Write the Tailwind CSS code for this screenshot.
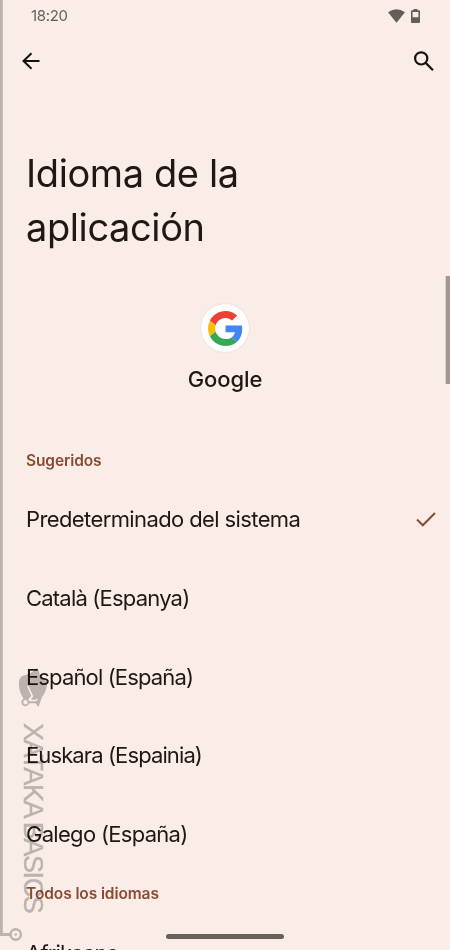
<!DOCTYPE html>
<html lang="es">
<head>
<meta charset="utf-8">
<title>Idioma de la aplicación</title>
<script src="https://cdn.jsdelivr.net/npm/@tailwindcss/browser@4"></script>
</head>
<body class="bg-[#faede8]">
<div class="relative flex h-[950px] w-[450px] flex-col overflow-hidden bg-[#faede8] font-['Inter',sans-serif] text-[#211714]">
  <header class="flex h-8 shrink-0 items-center justify-between pr-[30px] pl-[31px] text-[#655d5a]">
    <span class="text-[15px] leading-8 tracking-[-0.35px]">18:20</span>
    <div class="flex items-center gap-[6px]">
      <svg class="h-[14px] w-[17px]" viewBox="0 0 17 14" fill="currentColor"><path d="M0 3.200Q8.500-2.600 17 3.200L8.500 13.700Z"/></svg>
      <svg class="h-[14px] w-[9px]" viewBox="0 0 9 14" fill="currentColor"><path fill-rule="evenodd" d="M2.500 0h4v1.300H8a1 1 0 0 1 1 1V13a1 1 0 0 1-1 1H1a1 1 0 0 1-1-1V2.300a1 1 0 0 1 1-1h1.500ZM1.600 3V8.200h5.800V3Z"/></svg>
    </div>
  </header>
  <nav class="flex h-[58px] shrink-0 items-center justify-between pr-[16px] pl-[21px]">
    <svg class="h-[18px] w-[19px]" viewBox="0 0 19 18" fill="none" stroke="#171210" stroke-width="2"><path d="M18.500 9H2.500M10.500 1.200 2.500 9l8 7.800"/></svg>
    <svg class="h-[20px] w-[20px]" viewBox="0 0 20 20" fill="none" stroke="#171210" stroke-width="2.200"><circle cx="7.200" cy="7.400" r="6.100"/><path d="m11.700 11.900 7.300 7.300"/></svg>
  </nav>
  <h1 class="mt-[56px] h-[108px] shrink-0 pl-[26px] text-[38px] leading-[54px] font-normal tracking-[-0.4px]">Idioma de la<br>aplicación</h1>
  <section class="mt-[50px] flex shrink-0 flex-col items-center">
    <div class="flex size-[48px] items-center justify-center rounded-full bg-white shadow-[0_0_2px_rgba(80,50,40,0.15)]">
      <svg class="size-[35px]" viewBox="0 0 48 48"><path fill="#EA4335" d="M24 9.500c3.540 0 6.710 1.220 9.210 3.600l6.850-6.850C35.900 2.380 30.470 0 24 0 14.620 0 6.510 5.380 2.560 13.220l7.980 6.190C12.430 13.720 17.740 9.500 24 9.500z"/><path fill="#4285F4" d="M46.980 24.550c0-1.570-.15-3.090-.38-4.550H24v9.020h12.940c-.58 2.960-2.260 5.480-4.780 7.180l7.730 6c4.510-4.180 7.090-10.360 7.090-17.650z"/><path fill="#FBBC05" d="M10.530 28.590c-.48-1.450-.76-2.990-.76-4.590s.27-3.140.76-4.590l-7.980-6.190C.92 16.460 0 20.120 0 24s.92 7.540 2.560 10.780l7.970-6.190z"/><path fill="#34A853" d="M24 48c6.480 0 11.930-2.130 15.890-5.810l-7.730-6c-2.150 1.450-4.920 2.300-8.160 2.300-6.260 0-11.570-4.220-13.470-9.910l-7.980 6.190C6.510 42.620 14.620 48 24 48z"/></svg>
    </div>
    <p class="mt-[11px] text-[22px] leading-8 font-medium tracking-[-0.1px]">Google</p>
  </section>
  <h2 class="mt-[53px] h-[26px] shrink-0 pl-[26px] text-[15.5px] leading-[26px] font-semibold tracking-[-0.1px] text-[#8a4b32]">Sugeridos</h2>
  <ul class="mt-[6px] shrink-0 pl-[26px] text-[22px]">
    <li class="flex h-[79px] items-center justify-between pr-[14px] tracking-[-0.61px]"><span>Predeterminado del sistema</span>
      <svg class="h-[15px] w-[20px]" viewBox="0 0 20 15" fill="none" stroke="#8a4b32" stroke-width="2"><path d="m1 7.500 5.800 5.800L19 1"/></svg>
    </li>
    <li class="flex h-[79px] items-center tracking-[-0.8px]">Català (Espanya)</li>
    <li class="flex h-[78px] items-center tracking-[-0.86px]">Español (España)</li>
    <li class="flex h-[79px] items-center tracking-[-0.89px]">Euskara (Espainia)</li>
    <li class="flex h-[79px] items-center tracking-[-0.7px]">Galego (España)</li>
  </ul>
  <h2 class="mt-[7px] h-[26px] shrink-0 pl-[26px] text-[15.5px] leading-[26px] font-semibold tracking-[-0.1px] text-[#8a4b32]">Todos los idiomas</h2>
  <div class="mt-[7px] flex h-[79px] shrink-0 items-center pl-[26px] text-[22px] tracking-[-0.8px]">Afrikaans</div>

  <div class="absolute top-[276px] right-0 h-[108px] w-[5px] border-l border-white/60 bg-[#a3958f]"></div>
  <div class="absolute top-[934px] left-[166px] h-[5px] w-[118px] rounded-full bg-[#68605c]"></div>

  <div class="pointer-events-none absolute inset-0 mix-blend-multiply">
    <svg class="absolute inset-0 h-[950px] w-[60px]" viewBox="0 0 60 950" fill="none">
      <path d="M1.400 0V934.500H10" stroke="#c0c0c0" stroke-width="2.800"/>
      <circle cx="15.700" cy="934.500" r="5.200" stroke="#c0c0c0" stroke-width="2.400"/><circle cx="15.700" cy="934.500" r="1.300" fill="#c0c0c0"/>
      <path fill="#c0c0c0" fill-rule="evenodd" d="M22 676Q31 674 37.500 668Q40 673 40 677Q46 679 47 685Q46 692 42 697L38.500 707 35.500 703.300H29.200A4 4 0 1 1 23.500 698.700Q18 690 19 682Q19.500 678 22 676ZM25.500 700A2.200 2.200 0 1 0 25.500 704.400A2.200 2.200 0 0 0 25.500 700ZM27 686 31.300 696 28.200 699.300 29.500 701.300H36L38 699.300 36.500 698.800 35.500 699.700H31L33.300 696.200 28.500 686Z"/>
    </svg>
    <div class="absolute top-[723px] left-[18px] h-[200px] w-[30px] font-['Liberation_Sans',sans-serif] text-[27px] leading-[30px] tracking-[-1.400px] whitespace-nowrap text-[#c0c0c0] [-webkit-text-stroke:0.4px_#c0c0c0] [writing-mode:vertical-rl]">XATAKA BASICS</div>
  </div>
</div>
</body>
</html>
